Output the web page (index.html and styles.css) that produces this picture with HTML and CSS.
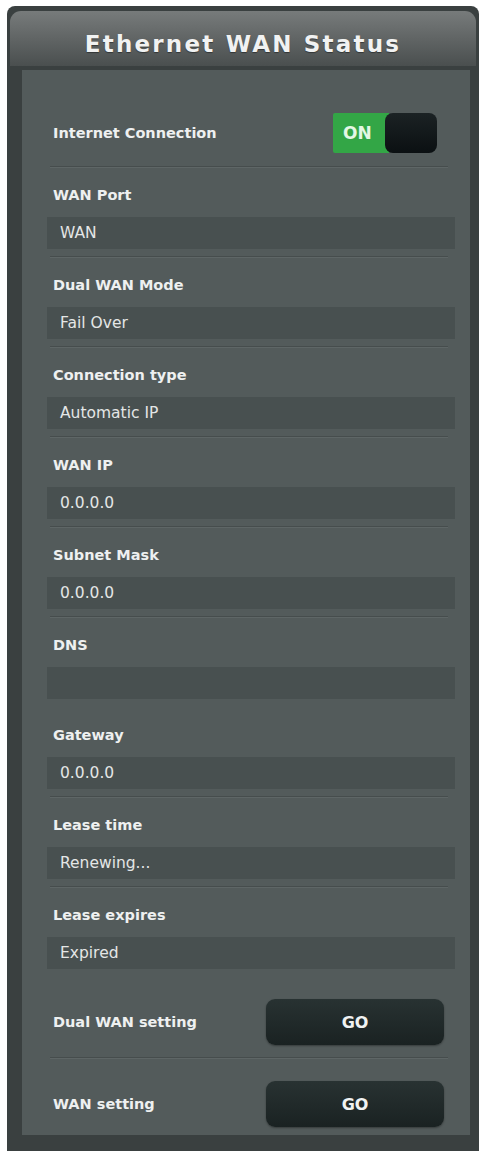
FILE: index.html
```html
<!DOCTYPE html>
<html lang="en">
<head>
<meta charset="utf-8">
<title>Ethernet WAN Status</title>
<link rel="stylesheet" href="styles.css">
</head>
<body>
<div class="frame">
  <div class="header"><h1 class="title">Ethernet WAN Status</h1></div>
  <div class="panel">
    <div class="row row-toggle">
      <span class="label">Internet Connection</span>
      <div class="toggle"><span class="toggle-on">ON</span><span class="toggle-knob"></span></div>
    </div>
    <div class="row">
      <div class="label">WAN Port</div>
      <div class="field">WAN</div>
    </div>
    <div class="row">
      <div class="label">Dual WAN Mode</div>
      <div class="field">Fail Over</div>
    </div>
    <div class="row">
      <div class="label">Connection type</div>
      <div class="field">Automatic IP</div>
    </div>
    <div class="row">
      <div class="label">WAN IP</div>
      <div class="field">0.0.0.0</div>
    </div>
    <div class="row">
      <div class="label">Subnet Mask</div>
      <div class="field">0.0.0.0</div>
    </div>
    <div class="row row-plain">
      <div class="label">DNS</div>
      <div class="field"></div>
    </div>
    <div class="row">
      <div class="label">Gateway</div>
      <div class="field">0.0.0.0</div>
    </div>
    <div class="row">
      <div class="label">Lease time</div>
      <div class="field">Renewing...</div>
    </div>
    <div class="row row-plain">
      <div class="label">Lease expires</div>
      <div class="field">Expired</div>
    </div>
    <div class="row row-btn">
      <span class="label">Dual WAN setting</span>
      <button class="go">GO</button>
    </div>
    <div class="row row-btn row-last">
      <span class="label">WAN setting</span>
      <button class="go">GO</button>
    </div>
  </div>
</div>
</body>
</html>
```
FILE: styles.css
```css
html, body {
  margin: 0;
  padding: 0;
  background: #ffffff;
}

body {
  font-family: "DejaVu Sans", "Liberation Sans", sans-serif;
}

.frame {
  margin: 6px 0 0 7px;
  width: 472px;
  height: 1145px;
  box-sizing: border-box;
  background: #3a4040;
  border-radius: 8px 8px 0 0;
  padding: 5px 3px 0 3px;
}

.header {
  height: 55px;
  border-radius: 11px 11px 0 0;
  background: linear-gradient(to bottom, #777b7b 0%, #636767 45%, #4a4f4f 100%);
  box-sizing: border-box;
  padding-top: 19px;
  text-align: center;
}

.title {
  margin: 0;
  font-family: "DejaVu Sans", sans-serif;
  font-weight: bold;
  font-size: 23px;
  line-height: 28px;
  letter-spacing: 2.2px;
  color: #f1f2f2;
  text-shadow: 0 1px 1px rgba(0, 0, 0, 0.4);
}

.panel {
  margin: 4px 6px 0 12px;
  height: 1065px;
  box-sizing: border-box;
  background: #535b5b;
  padding: 0 22px 0 28px;
}

.row {
  padding: 13px 0 7px 0;
  border-bottom: 1px solid #464d4d;
  box-shadow: 0 1px 0 #5e6666;
  margin-bottom: 1px;
}

.row-plain {
  border-bottom-color: transparent;
  box-shadow: none;
}

.label {
  display: block;
  padding-left: 3px;
  font-family: "DejaVu Sans", sans-serif;
  font-weight: bold;
  font-size: 14.5px;
  line-height: 28px;
  color: #eef0f0;
  margin-bottom: 8px;
}

.field {
  margin: 0 -7px 0 -3px;
  height: 32px;
  box-sizing: border-box;
  padding-left: 13px;
  background: #485050;
  font-family: "DejaVu Sans", sans-serif;
  font-size: 15.5px;
  line-height: 33px;
  color: #e4e6e6;
}

.row-toggle {
  display: flex;
  align-items: center;
  justify-content: space-between;
  padding: 43px 11px 13px 0;
}

.row-toggle .label,
.row-btn .label {
  margin-bottom: 0;
}

.toggle {
  display: flex;
  height: 40px;
}

.toggle-on {
  width: 56px;
  height: 40px;
  box-sizing: border-box;
  padding-left: 10px;
  background: #33a646;
  border-radius: 2px 0 0 2px;
  font-family: "DejaVu Sans", sans-serif;
  font-weight: bold;
  font-size: 17px;
  line-height: 40px;
  color: #e4f7e4;
}

.toggle-knob {
  width: 52px;
  height: 40px;
  margin-left: -4px;
  border-radius: 8px;
  background: linear-gradient(to bottom, #1b2224, #0b1012);
}

.row-btn {
  display: flex;
  align-items: center;
  justify-content: space-between;
  padding: 21px 4px 12px 0;
}

.row-last {
  padding: 22px 4px 6px 0;
  border-bottom: none;
  box-shadow: none;
}

.go {
  width: 178px;
  height: 46px;
  border: none;
  border-radius: 9px;
  background: linear-gradient(to bottom, #283232, #1a2222);
  box-shadow: 0 1px 2px rgba(0, 0, 0, 0.35);
  font-family: "DejaVu Sans", sans-serif;
  font-weight: bold;
  font-size: 16px;
  color: #f0f2f2;
  padding: 0;
}
```
